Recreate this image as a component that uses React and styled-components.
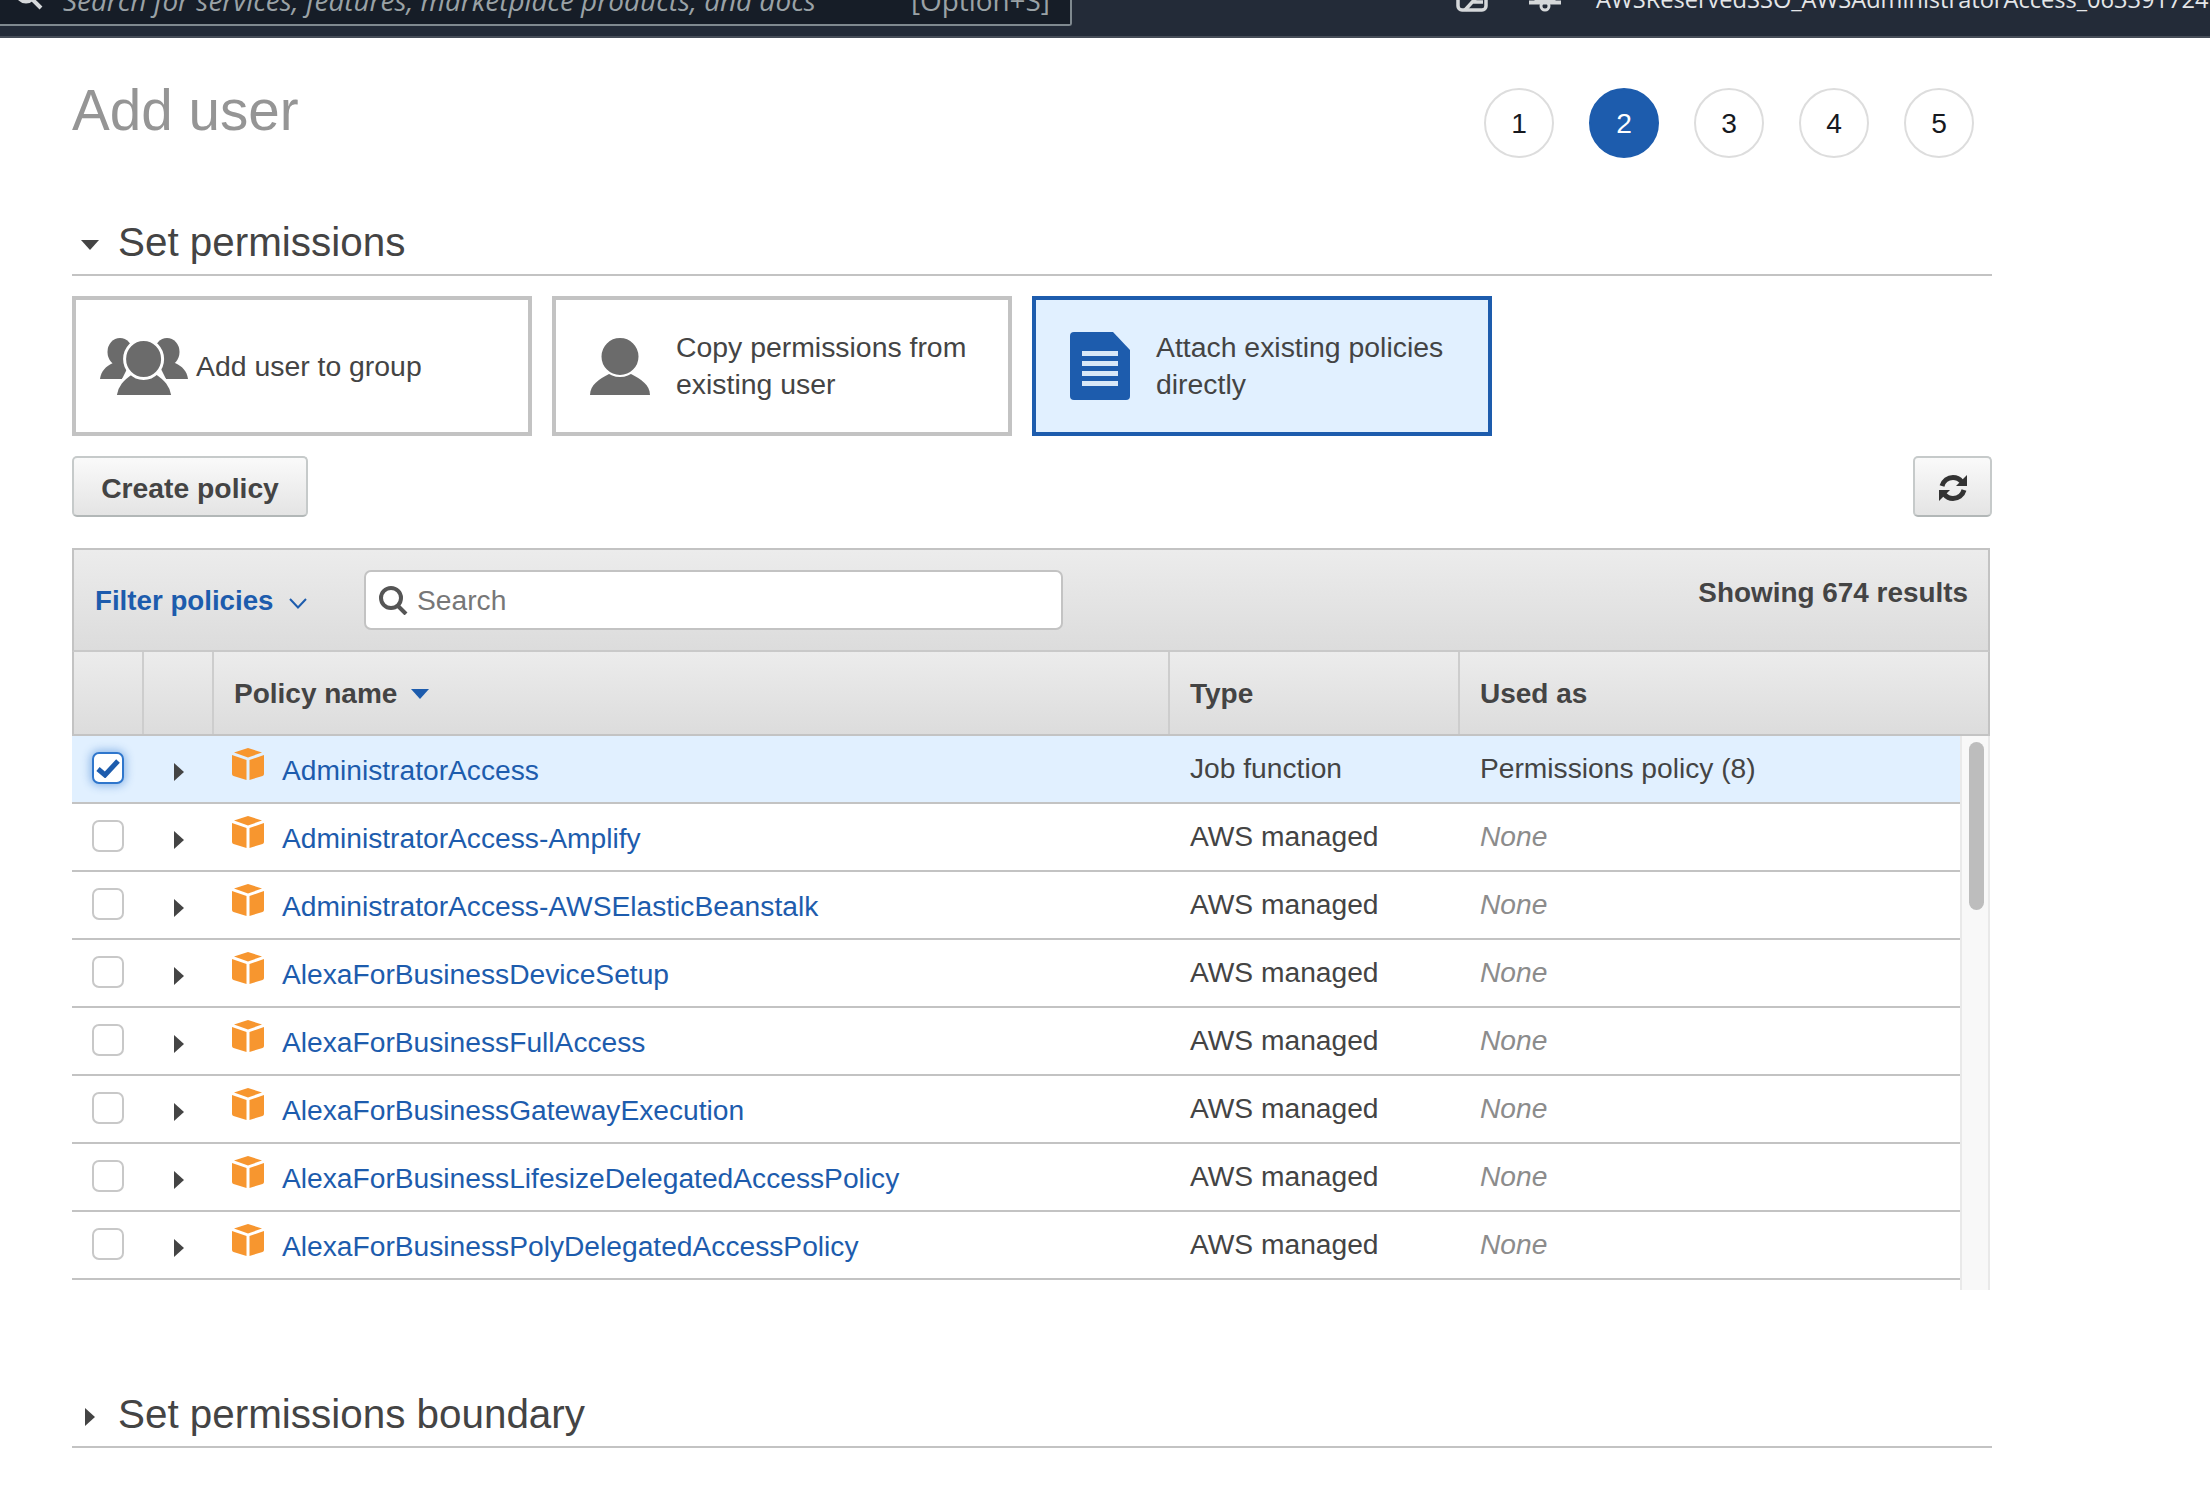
import React from 'react'
import styled, { createGlobalStyle } from 'styled-components'

const GlobalStyle = createGlobalStyle`
  html, body {
    margin: 0;
    padding: 0;
    background: #fff;
    font-family: "Liberation Sans", Arial, sans-serif;
    color: #444;
  }
  * {
    box-sizing: border-box;
  }
`

const TopBar = styled.header`
  display: flex;
  align-items: flex-end;
  height: 38px;
  overflow: hidden;
  background: #232b38;
  border-bottom: 2px solid #464d58;
`

const SearchBox = styled.div`
  display: flex;
  align-items: flex-end;
  justify-content: space-between;
  flex: none;
  width: 1072px;
  height: 60px;
  margin-bottom: 10px;
  padding: 0 20px 6px 15px;
  background: #161d27;
  border-right: 2px solid #7f898f;
  border-bottom: 2px solid #7f898f;
  border-bottom-right-radius: 3px;
  color: #9aa2a6;
  font-family: "Open Sans", sans-serif;
  font-size: 27.9px;
  line-height: 36px;
  white-space: nowrap;
`

const SearchHint = styled.span`
  display: flex;
  align-items: flex-end;
  gap: 20px;
  font-style: italic;

  svg {
    margin-bottom: 8px;
  }
`

const Account = styled.div`
  display: flex;
  align-items: flex-end;
  flex: 1;
  min-width: 0;
  height: 60px;
  margin-bottom: 24px;
  padding-left: 384px;
  color: #e4e6e8;
  font-family: "Open Sans", sans-serif;
  font-size: 23.6px;
  line-height: 36px;
  white-space: nowrap;
`

const AccountName = styled.span`
  margin-left: 34px;
  margin-bottom: -5px;
`

const BarIcon = styled.svg`
  flex: none;
  margin-left: ${props => props.$gap || 0}px;
`

const Page = styled.main`
  width: 1920px;
  margin-left: 72px;
  padding-bottom: 64px;
`

const PageHead = styled.div`
  display: flex;
  justify-content: space-between;
  height: 70px;
  margin-top: 50px;
  padding-right: 18px;
`

const Title = styled.h1`
  margin: 0;
  color: #959595;
  font-size: 56.6px;
  font-weight: 400;
  line-height: 46px;
`

const Steps = styled.ol`
  display: flex;
  gap: 35px;
  margin: 0;
  padding: 0;
  list-style: none;
`

const Step = styled.li`
  display: flex;
  align-items: center;
  justify-content: center;
  width: 70px;
  height: 70px;
  border-radius: 50%;
  border: 2px solid ${props => (props.$active ? '#1d5cad' : '#ddd')};
  background: ${props => (props.$active ? '#1d5cad' : '#fff')};
  color: ${props => (props.$active ? '#fff' : '#16191f')};
  font-size: 28.2px;
`

const SectionHead = styled.h2`
  display: flex;
  align-items: center;
  margin: ${props => props.$top}px 0 0;
  padding-bottom: 9px;
  border-bottom: 2px solid #c3c3c3;
  color: #444;
  font-size: 40.4px;
  font-weight: 400;
  line-height: 46px;
`

const Caret = styled.i`
  display: block;
  flex: none;
  width: 0;
  height: 0;
  border-style: solid;
  ${props => (props.$down
    ? `border-width: ${props.$size * 1.15}px ${props.$size}px 0; border-color: ${props.$color || '#444'} transparent transparent;`
    : `border-width: ${props.$size}px 0 ${props.$size}px ${props.$size * 1.2}px; border-color: transparent transparent transparent ${props.$color || '#444'};`)}
`

const SectionCaret = styled.span`
  display: flex;
  justify-content: center;
  width: 46px;
  padding-top: 6px;
  padding-right: 10px;
`

const Cards = styled.div`
  display: flex;
  gap: 20px;
  margin-top: 20px;
`

const Card = styled.div`
  display: flex;
  align-items: center;
  width: 460px;
  height: 140px;
  padding-left: ${props => props.$pad}px;
  gap: ${props => props.$gap}px;
  border: 4px solid ${props => (props.$active ? '#1d5cad' : '#c3c3c3')};
  background: ${props => (props.$active ? '#e1f0ff' : '#fff')};
  color: #444;
  font-size: 28.4px;
  line-height: 36.6px;
`

const Toolbar = styled.div`
  display: flex;
  justify-content: space-between;
  margin-top: 20px;
`

const Button = styled.button`
  display: flex;
  align-items: center;
  justify-content: center;
  width: ${props => props.$width}px;
  height: 61px;
  padding: 3px 0 0;
  border: 2px solid #c6caca;
  border-bottom-color: #b2b7b7;
  border-radius: 5px;
  background: linear-gradient(#fafafa, #e4e4e4);
  color: #444;
  font-family: inherit;
  font-size: 28.3px;
  font-weight: 700;
`

const Table = styled.section`
  width: 1918px;
  margin-top: 31px;
`

const FilterBar = styled.div`
  display: flex;
  align-items: center;
  height: 104px;
  padding: 0 20px 0 21px;
  border: 2px solid #c3c3c3;
  border-bottom-color: #c9c9c9;
  background: linear-gradient(#ececec, #dcdcdc);
`

const FilterLabel = styled.span`
  display: flex;
  align-items: center;
  width: 269px;
  padding-top: 1px;
  color: #1d5cad;
  font-size: 27.7px;
  font-weight: 700;
`

const FilterChevron = styled.svg`
  margin-left: 16px;
  margin-top: 6px;
`

const SearchField = styled.div`
  display: flex;
  align-items: center;
  width: 699px;
  height: 60px;
  padding-left: 12px;
  gap: 9px;
  border: 2px solid #c3c3c3;
  border-radius: 7px;
  background: #fff;
  color: #777;
  font-size: 28.2px;
`

const ResultCount = styled.span`
  margin-left: auto;
  margin-bottom: 14px;
  color: #444;
  font-size: 27.9px;
  font-weight: 700;
`

const HeadRow = styled.div`
  display: grid;
  grid-template-columns: 70px 70px 956px 290px 1fr;
  height: 84px;
  border-left: 2px solid #c3c3c3;
  border-right: 2px solid #c3c3c3;
  border-bottom: 2px solid #c3c3c3;
  background: linear-gradient(#ececec, #dcdcdc);
`

const HeadCell = styled.div`
  display: flex;
  align-items: center;
  gap: 14px;
  padding: 2px 0 0 20px;
  border-right: ${props => (props.$last ? 'none' : '2px solid #cdcdcd')};
  color: #444;
  font-size: 28px;
  font-weight: 700;
`

const TableBody = styled.div`
  display: flex;
  height: 554px;
  overflow: hidden;
`

const RowList = styled.div`
  flex: 1;
`

const Row = styled.div`
  display: grid;
  grid-template-columns: 72px 70px 955px 290px 1fr;
  height: 68px;
  border-bottom: 2px solid #c3c3c3;
  background: ${props => (props.$selected ? '#e1f0ff' : '#fff')};
  font-size: 28.2px;
  color: #444;
`

const CheckCell = styled.div`
  display: flex;
  padding: 16px 0 0 20px;
`

const Checkbox = styled.span`
  display: flex;
  align-items: center;
  justify-content: center;
  width: 32px;
  height: 32px;
  border-radius: 7px;
  background: #fff;
  border: 2px solid ${props => (props.$checked ? '#2f76cc' : '#c8c8c8')};
  box-shadow: ${props => (props.$checked ? '0 0 8px 2px rgba(47, 118, 204, 0.45)' : 'none')};
`

const ExpandCell = styled.div`
  display: flex;
  padding: 27px 0 0 30px;
`

const NameCell = styled.div`
  display: flex;
  padding: 12px 0 0 18px;
  gap: 18px;
`

const PolicyLink = styled.a`
  margin-top: 4px;
  color: #1d5cad;
  line-height: 36px;
  text-decoration: none;
`

const TextCell = styled.div`
  padding: 14px 0 0 21px;
  line-height: 36px;
  color: ${props => (props.$muted ? '#8c8c8c' : '#444')};
  font-style: ${props => (props.$muted ? 'italic' : 'normal')};
`

const ScrollTrack = styled.div`
  flex: none;
  width: 30px;
  padding: 6px 0 0 7px;
  background: #f8f8f8;
  border-left: 2px solid #e9e9e9;
  border-right: 2px solid #e9e9e9;
`

const ScrollThumb = styled.div`
  width: 15px;
  height: 168px;
  border-radius: 8px;
  background: #bdbdbd;
`

const GroupIcon = () => (
  <svg width="88" height="57" viewBox="0 0 88 57">
    <g fill="#6b6b6b">
      <ellipse cx="20" cy="14" rx="12.5" ry="14" />
      <ellipse cx="67" cy="14" rx="12.5" ry="14" />
      <path d="M0 41 C1 33 6 28 13 25 L30 25 L22 41 Z" />
      <path d="M88 41 C87 33 82 28 75 25 L58 25 L66 41 Z" />
    </g>
    <g fill="#6b6b6b" stroke="#fff" strokeWidth="3">
      <path d="M15 62 C15 47 24 40 33 34 L55 34 C64 40 73 47 73 62 Z" />
      <ellipse cx="43.6" cy="21" rx="19" ry="19.5" />
    </g>
  </svg>
)

const PersonIcon = () => (
  <svg width="60" height="57" viewBox="0 0 60 57">
    <path fill="#6b6b6b" d="M0 57 C0 47 9 41 19 36 L41 36 C51 41 60 47 60 57 Z" />
    <ellipse cx="30" cy="18.5" rx="19.5" ry="19.5" fill="#6b6b6b" stroke="#fff" strokeWidth="2" />
  </svg>
)

const DocIcon = () => (
  <svg width="60" height="68" viewBox="0 0 60 68">
    <path fill="#1d5cad" d="M4 0 H43 L60 18 V64 A4 4 0 0 1 56 68 H4 A4 4 0 0 1 0 64 V4 A4 4 0 0 1 4 0 Z" />
    <g fill="#d8e8f8">
      <rect x="12" y="19" width="36" height="5" />
      <rect x="12" y="29" width="36" height="5" />
      <rect x="12" y="39" width="36" height="5" />
      <rect x="12" y="49" width="36" height="5" />
    </g>
  </svg>
)

const CubeIcon = () => (
  <svg width="32" height="32" viewBox="0 0 32 32">
    <g fill="#f7962f">
      <path d="M16 0 L30 4.5 L16 9.5 L2 4.5 Z" />
      <path d="M0 7 L14.5 12 V32 L1.5 28 Q0 27.5 0 26 Z" />
      <path d="M32 7 L17.5 12 V32 L30.5 28 Q32 27.5 32 26 Z" />
    </g>
  </svg>
)

const RefreshIcon = () => (
  <svg width="30" height="28" viewBox="0 0 30 28">
    <g>
      <path d="M4 12 C5.5 6.5 10 3.5 15 3.5 C18.5 3.5 21.5 5 23.5 7.5" fill="none" stroke="#333" strokeWidth="5" />
      <path d="M29 1 V12 H18 Z" fill="#333" />
    </g>
    <g transform="rotate(180 15 14)">
      <path d="M4 12 C5.5 6.5 10 3.5 15 3.5 C18.5 3.5 21.5 5 23.5 7.5" fill="none" stroke="#333" strokeWidth="5" />
      <path d="M29 1 V12 H18 Z" fill="#333" />
    </g>
  </svg>
)

const policies = [
  ['AdministratorAccess', 'Job function', 'Permissions policy (8)'],
  ['AdministratorAccess-Amplify', 'AWS managed', 'None'],
  ['AdministratorAccess-AWSElasticBeanstalk', 'AWS managed', 'None'],
  ['AlexaForBusinessDeviceSetup', 'AWS managed', 'None'],
  ['AlexaForBusinessFullAccess', 'AWS managed', 'None'],
  ['AlexaForBusinessGatewayExecution', 'AWS managed', 'None'],
  ['AlexaForBusinessLifesizeDelegatedAccessPolicy', 'AWS managed', 'None'],
  ['AlexaForBusinessPolyDelegatedAccessPolicy', 'AWS managed', 'None']
]

export default function App() {
  return (
    <>
      <GlobalStyle />
      <TopBar>
        <SearchBox>
          <SearchHint>
            <svg width="28" height="28" viewBox="0 0 28 28" fill="none" stroke="#d5d8da" strokeWidth="4">
              <circle cx="11" cy="11" r="8.5" />
              <path d="M17 17 L26 26" />
            </svg>
            Search for services, features, marketplace products, and docs
          </SearchHint>
          <span>[Option+S]</span>
        </SearchBox>
        <Account>
          <BarIcon width="32" height="32" viewBox="0 0 32 32" fill="none" stroke="#d5d8da" strokeWidth="3.5">
            <rect x="2" y="2" width="28" height="28" rx="4" />
            <path d="M9 30 L20 18 M16 22 H27" />
          </BarIcon>
          <BarIcon $gap={40} width="34" height="34" viewBox="0 0 34 34" fill="none" stroke="#d5d8da" strokeWidth="3">
            <path d="M8 22 C8 12 10 4 17 4 C24 4 26 12 26 22 Z" fill="#d5d8da" />
            <path d="M1 24.5 H33" strokeWidth="4" />
            <circle cx="17" cy="28" r="4" />
          </BarIcon>
          <AccountName>AWSReservedSSO_AWSAdministratorAccess_063391724</AccountName>
        </Account>
      </TopBar>
      <Page>
        <PageHead>
          <Title>Add user</Title>
          <Steps>
            {[1, 2, 3, 4, 5].map(n => (
              <Step key={n} $active={n === 2}>{n}</Step>
            ))}
          </Steps>
        </PageHead>
        <SectionHead $top={61}>
          <SectionCaret><Caret $down $size={9} /></SectionCaret>
          Set permissions
        </SectionHead>
        <Cards>
          <Card $pad={24} $gap={8}><GroupIcon />Add user to group</Card>
          <Card $pad={34} $gap={26}><PersonIcon /><span>Copy permissions from<br />existing user</span></Card>
          <Card $active $pad={34} $gap={26}><DocIcon /><span>Attach existing policies<br />directly</span></Card>
        </Cards>
        <Toolbar>
          <Button $width={236}>Create policy</Button>
          <Button $width={79}><RefreshIcon /></Button>
        </Toolbar>
        <Table>
          <FilterBar>
            <FilterLabel>
              Filter policies
              <FilterChevron width="18" height="11" viewBox="0 0 18 11" fill="none" stroke="#1d5cad" strokeWidth="2">
                <path d="M1 1 L9 9.5 L17 1" />
              </FilterChevron>
            </FilterLabel>
            <SearchField>
              <svg width="30" height="29" viewBox="0 0 30 29" fill="none" stroke="#555" strokeWidth="4">
                <circle cx="13" cy="12" r="10" />
                <path d="M20 20 L28 28" />
              </svg>
              Search
            </SearchField>
            <ResultCount>Showing 674 results</ResultCount>
          </FilterBar>
          <HeadRow>
            <HeadCell />
            <HeadCell />
            <HeadCell>Policy name <Caret $down $size={9.5} $color="#1d5cad" /></HeadCell>
            <HeadCell>Type</HeadCell>
            <HeadCell $last>Used as</HeadCell>
          </HeadRow>
          <TableBody>
            <RowList>
              {policies.map(([name, type, used], i) => (
                <Row key={name} $selected={i === 0}>
                  <CheckCell>
                    <Checkbox $checked={i === 0}>
                      {i === 0 && (
                        <svg width="24" height="20" viewBox="0 0 24 20" fill="none" stroke="#1d5cad" strokeWidth="5">
                          <path d="M2 11 L9 17 L22 3" />
                        </svg>
                      )}
                    </Checkbox>
                  </CheckCell>
                  <ExpandCell><Caret $size={9} /></ExpandCell>
                  <NameCell>
                    <CubeIcon />
                    <PolicyLink href="#">{name}</PolicyLink>
                  </NameCell>
                  <TextCell>{type}</TextCell>
                  <TextCell $muted={used === 'None'}>{used}</TextCell>
                </Row>
              ))}
            </RowList>
            <ScrollTrack><ScrollThumb /></ScrollTrack>
          </TableBody>
        </Table>
        <SectionHead $top={101}>
          <SectionCaret><Caret $size={9} /></SectionCaret>
          Set permissions boundary
        </SectionHead>
      </Page>
    </>
  )
}
